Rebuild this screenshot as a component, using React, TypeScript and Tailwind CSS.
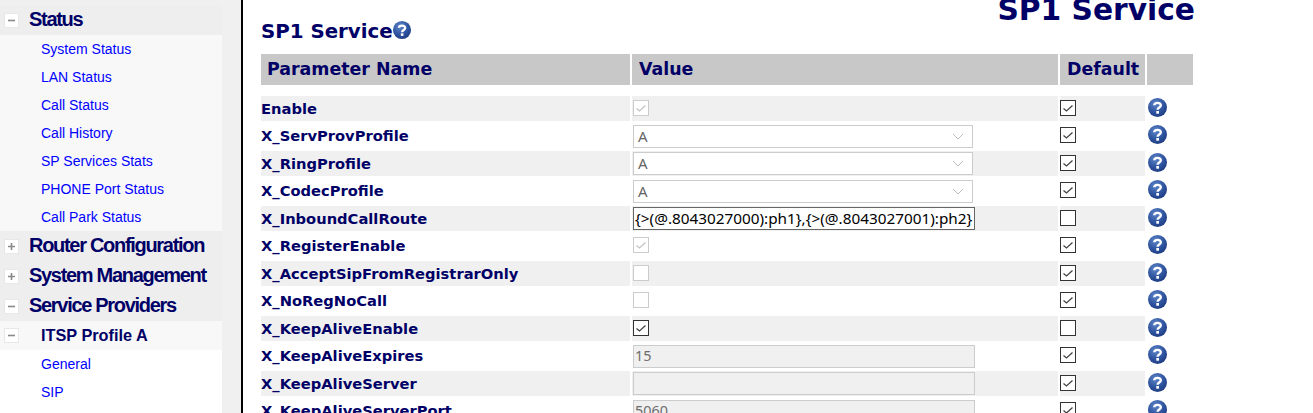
const SANS = "font-['Liberation_Sans',Arial,sans-serif]";

type Value =
  | { kind: 'check'; checked: boolean; disabled: boolean }
  | { kind: 'select' }
  | { kind: 'route'; text: string }
  | { kind: 'text'; text: string };

type Row = { name: string; value: Value; def: boolean };

const ROWS: Row[] = [
  { name: 'Enable', value: { kind: 'check', checked: true, disabled: true }, def: true },
  { name: 'X_ServProvProfile', value: { kind: 'select' }, def: true },
  { name: 'X_RingProfile', value: { kind: 'select' }, def: true },
  { name: 'X_CodecProfile', value: { kind: 'select' }, def: true },
  { name: 'X_InboundCallRoute', value: { kind: 'route', text: '{>(@.8043027000):ph1},{>(@.8043027001):ph2}' }, def: false },
  { name: 'X_RegisterEnable', value: { kind: 'check', checked: true, disabled: true }, def: true },
  { name: 'X_AcceptSipFromRegistrarOnly', value: { kind: 'check', checked: false, disabled: true }, def: true },
  { name: 'X_NoRegNoCall', value: { kind: 'check', checked: false, disabled: true }, def: true },
  { name: 'X_KeepAliveEnable', value: { kind: 'check', checked: true, disabled: false }, def: false },
  { name: 'X_KeepAliveExpires', value: { kind: 'text', text: '15' }, def: true },
  { name: 'X_KeepAliveServer', value: { kind: 'text', text: '' }, def: true },
  { name: 'X_KeepAliveServerPort', value: { kind: 'text', text: '5060' }, def: true },
];

const STATUS_LINKS = ['System Status', 'LAN Status', 'Call Status', 'Call History', 'SP Services Stats', 'PHONE Port Status', 'Call Park Status'];

function Toggle({ open }: { open: boolean }) {
  return (
    <span className="flex h-[15px] w-[15px] shrink-0 items-center justify-center border border-[#e8e8e8] bg-white">
      <svg width="9" height="9" viewBox="0 0 9 9">
        <path d={open ? 'M1 4.5H8' : 'M1 4.5H8M4.5 1V8'} stroke="#8a8a8a" strokeWidth="1.6" />
      </svg>
    </span>
  );
}

function SectionHead({ label, open }: { label: string; open: boolean }) {
  return (
    <div className="flex h-[30px] items-center bg-[#eeeeee] pl-1">
      <Toggle open={open} />
      <span className={`${SANS} mb-[2px] ml-[10px] text-[20px] font-bold tracking-[-1.3px] text-[#000066]`}>{label}</span>
    </div>
  );
}

function NavLink({ label }: { label: string }) {
  return <div className={`${SANS} flex h-[28px] items-center pl-[41px] text-[14px] text-[#0000ff]`}>{label}</div>;
}

function HelpIcon({ size = 21 }: { size?: number }) {
  return (
    <svg width={size} height={size} viewBox="0 0 21 21" className="shrink-0">
      <defs>
        <radialGradient id="helpBall" cx="40%" cy="30%" r="75%">
          <stop offset="0%" stopColor="#5f86c9" />
          <stop offset="60%" stopColor="#2f549f" />
          <stop offset="100%" stopColor="#1c3a80" />
        </radialGradient>
      </defs>
      <circle cx="10.5" cy="10.5" r="9.5" fill="url(#helpBall)" />
      <path d="M7.3 8.2C7.4 5.2 13.8 5 13.8 8.3C13.8 10.6 10.6 10.4 10.6 12.8" fill="none" stroke="#fff" strokeWidth="2.4" />
      <rect x="9.3" y="14" width="2.7" height="2.7" fill="#fff" />
    </svg>
  );
}

function Checkbox({ checked, disabled }: { checked: boolean; disabled: boolean }) {
  return (
    <span className={`mb-[2px] flex h-4 w-4 items-center justify-center border-[1.5px] ${disabled ? 'border-[#cccccc]' : 'border-[#333333]'} bg-white`}>
      {checked && (
        <svg width="12" height="12" viewBox="0 0 12 12">
          <path d="M1.5 6.5L4.5 9L10.5 3.5" fill="none" stroke={disabled ? '#c4c4c4' : '#444444'} strokeWidth="1.3" />
        </svg>
      )}
    </span>
  );
}

function ValueCell({ value }: { value: Value }) {
  if (value.kind === 'check') return <Checkbox checked={value.checked} disabled={value.disabled} />;
  if (value.kind === 'select') {
    return (
      <div className="flex h-[23px] w-[340px] items-center justify-between border border-[#cccccc] bg-white pl-[4px] pr-[8px] font-['Noto_Sans',sans-serif] text-[15px] text-[#666666]">
        <span>A</span>
        <svg width="12" height="7" viewBox="0 0 12 7">
          <path d="M1 1L6 6L11 1" fill="none" stroke="#bdbdbd" strokeWidth="1" />
        </svg>
      </div>
    );
  }
  if (value.kind === 'route') {
    return (
      <div className="flex h-[23px] w-[342px] items-center overflow-hidden whitespace-nowrap border border-[#666666] bg-white pl-[1px] font-['Noto_Sans',sans-serif] text-[15.3px] text-black">
        {value.text}
      </div>
    );
  }
  return (
    <div className="flex h-[23px] w-[342px] items-center border-[1.5px] border-[#cccccc] bg-[#f0f0f0] pl-[1px] font-['Noto_Sans',sans-serif] text-[14.4px] text-[#6d6d6d]">
      {value.text}
    </div>
  );
}

function ParamRow({ row, index }: { row: Row; index: number }) {
  const shade = index % 2 === 0 ? 'bg-[#f0f0f0]' : 'bg-white';
  return (
    <div className="grid h-[27.5px] grid-cols-[369px_426px_85px_46px] gap-x-[2px]">
      <div className={`${shade} flex h-[25px] items-center whitespace-nowrap pt-px font-['DejaVu_Sans',sans-serif] text-[14.7px] font-bold text-[#000066]`}>
        {row.name}
      </div>
      <div className={`${shade} flex h-[25px] items-center pl-px`}>
        <ValueCell value={row.value} />
      </div>
      <div className={`${shade} flex h-[25px] items-center`}>
        <Checkbox checked={row.def} disabled={false} />
      </div>
      <div className="flex h-[25px] items-center pb-[3px]">
        <HelpIcon />
      </div>
    </div>
  );
}

export default function App() {
  return (
    <div className="flex h-[413px] w-[1313px] overflow-hidden bg-white">
      <aside className="h-full w-[243px] shrink-0 border-r-2 border-black bg-[#f0f0f0] pt-[5px]">
        <div className="flex h-full w-[222px] flex-col bg-white">
          <SectionHead label="Status" open />
          <div className="bg-[#f8f8f8]">
            {STATUS_LINKS.map((label) => (
              <NavLink key={label} label={label} />
            ))}
          </div>
          <SectionHead label="Router Configuration" open={false} />
          <SectionHead label="System Management" open={false} />
          <SectionHead label="Service Providers" open />
          <div className="flex h-[29px] items-center bg-[#f8f8f8] pl-1">
            <Toggle open />
            <span className={`${SANS} ml-[22px] text-[16.3px] font-bold text-[#000066]`}>ITSP Profile A</span>
          </div>
          <NavLink label="General" />
          <NavLink label="SIP" />
        </div>
      </aside>
      <main className="w-[952px] pl-[18px]">
        <div className="-mt-[7px] flex h-[26px] w-[934px] justify-end whitespace-nowrap font-['DejaVu_Sans',sans-serif] text-[29.7px] font-bold leading-[34px] text-[#000066]">
          SP1 Service
        </div>
        <div className="flex h-[24px] items-center font-['DejaVu_Sans',sans-serif] text-[19.8px] font-bold text-[#000066]">
          <span className="mt-[2px]">SP1 Service</span>
          <span className="-ml-px mb-[2px]">
            <HelpIcon size={20} />
          </span>
        </div>
        <div className="mt-[11px] grid h-[31px] grid-cols-[369px_426px_85px_46px] gap-x-[2px] font-['DejaVu_Sans',sans-serif] text-[17.4px] font-bold text-[#000066]">
          <div className="flex items-center bg-[#c8c8c8] pl-[6px]">Parameter Name</div>
          <div className="flex items-center bg-[#c8c8c8] pl-[7px]">Value</div>
          <div className="flex items-center bg-[#c8c8c8] pl-[7px]">Default</div>
          <div className="bg-[#c8c8c8]" />
        </div>
        <div className="mt-[11px]">
          {ROWS.map((row, i) => (
            <ParamRow key={row.name} row={row} index={i} />
          ))}
        </div>
      </main>
    </div>
  );
}
